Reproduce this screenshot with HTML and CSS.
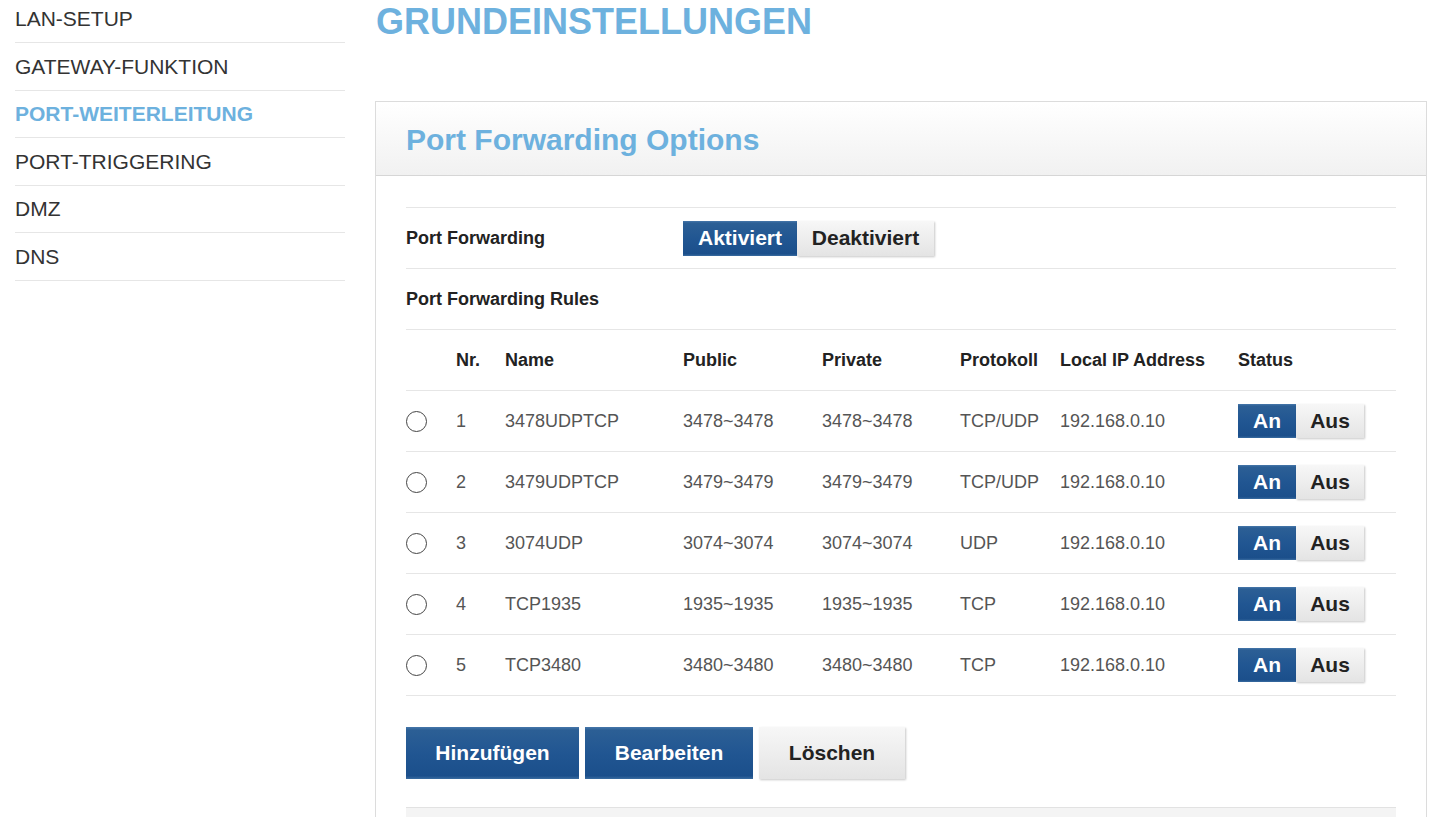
FILE: index.html
```html
<!DOCTYPE html>
<html lang="de">

<head>
    <meta charset="UTF-8">
    <meta name="viewport" content="width=device-width, initial-scale=1.0">
    <title>Port-Weiterleitung</title>
    <link rel="stylesheet" href="styles.css">
</head>

<body>
    <div class="page">
        <ul class="side-nav">
            <li class="side-item">LAN-SETUP</li>
            <li class="side-item">GATEWAY-FUNKTION</li>
            <li class="side-item active">PORT-WEITERLEITUNG</li>
            <li class="side-item">PORT-TRIGGERING</li>
            <li class="side-item">DMZ</li>
            <li class="side-item">DNS</li>
        </ul>

        <div class="main">
            <h1 class="page-title">GRUNDEINSTELLUNGEN</h1>

            <div class="panel">
                <div class="panel-head">
                    <h2>Port Forwarding Options</h2>
                </div>
                <div class="panel-body">
                    <div class="form-row">
                        <div class="form-label">Port Forwarding</div>
                        <div class="toggle">
                            <span class="btn btn-blue">Aktiviert</span><span class="btn btn-gray">Deaktiviert</span>
                        </div>
                    </div>
                    <div class="form-row">
                        <div class="form-label">Port Forwarding Rules</div>
                    </div>

                    <div class="rules">
                        <div class="rule head">
                            <span></span>
                            <span>Nr.</span>
                            <span>Name</span>
                            <span>Public</span>
                            <span>Private</span>
                            <span>Protokoll</span>
                            <span>Local IP Address</span>
                            <span>Status</span>
                        </div>
                        <div class="rule">
                            <span><i class="radio"></i></span>
                            <span>1</span>
                            <span>3478UDPTCP</span>
                            <span>3478~3478</span>
                            <span>3478~3478</span>
                            <span>TCP/UDP</span>
                            <span>192.168.0.10</span>
                            <span class="status"><b class="sw sw-on">An</b><b class="sw sw-off">Aus</b></span>
                        </div>
                        <div class="rule">
                            <span><i class="radio"></i></span>
                            <span>2</span>
                            <span>3479UDPTCP</span>
                            <span>3479~3479</span>
                            <span>3479~3479</span>
                            <span>TCP/UDP</span>
                            <span>192.168.0.10</span>
                            <span class="status"><b class="sw sw-on">An</b><b class="sw sw-off">Aus</b></span>
                        </div>
                        <div class="rule">
                            <span><i class="radio"></i></span>
                            <span>3</span>
                            <span>3074UDP</span>
                            <span>3074~3074</span>
                            <span>3074~3074</span>
                            <span>UDP</span>
                            <span>192.168.0.10</span>
                            <span class="status"><b class="sw sw-on">An</b><b class="sw sw-off">Aus</b></span>
                        </div>
                        <div class="rule">
                            <span><i class="radio"></i></span>
                            <span>4</span>
                            <span>TCP1935</span>
                            <span>1935~1935</span>
                            <span>1935~1935</span>
                            <span>TCP</span>
                            <span>192.168.0.10</span>
                            <span class="status"><b class="sw sw-on">An</b><b class="sw sw-off">Aus</b></span>
                        </div>
                        <div class="rule">
                            <span><i class="radio"></i></span>
                            <span>5</span>
                            <span>TCP3480</span>
                            <span>3480~3480</span>
                            <span>3480~3480</span>
                            <span>TCP</span>
                            <span>192.168.0.10</span>
                            <span class="status"><b class="sw sw-on">An</b><b class="sw sw-off">Aus</b></span>
                        </div>
                    </div>

                    <div class="actions">
                        <span class="btn btn-blue btn-big" style="width:173px">Hinzufügen</span>
                        <span class="btn btn-blue btn-big" style="width:168px">Bearbeiten</span>
                        <span class="btn btn-gray btn-big" style="width:146px">Löschen</span>
                    </div>

                    <div class="panel-foot"></div>
                </div>
            </div>
        </div>
    </div>
</body>

</html>
```

FILE: styles.css
```css
body {
    margin: 0;
    font-family: Arial, "Liberation Sans", sans-serif;
    color: #333;
    background: #fff;
}

.page {
    display: flex;
    gap: 30px;
    padding: 0 8px 0 15px;
}

/* left menu */
.side-nav {
    list-style: none;
    margin: -4.5px 0 0;
    padding: 0;
    width: 330px;
    flex-shrink: 0;
}
.side-item {
    font-size: 21px;
    line-height: 22px;
    padding: 12.5px 0 12px;
    border-bottom: 1px solid #e6e6e6;
    color: #333;
}
.side-item.active {
    color: #6db1de;
    font-weight: bold;
}

.main {
    flex: 1;
}
.page-title {
    margin: 4px 0 0 1px;
    font-size: 36px;
    line-height: 36px;
    color: #6db1de;
}

/* panel */
.panel {
    margin-top: 61px;
    border: 1px solid #dcdcdc;
    border-bottom: 0;
}
.panel-head {
    height: 73px;
    border-bottom: 1px solid #d6d6d6;
    background: linear-gradient(#fff, #f1f1f1);
    padding-left: 30px;
}
.panel-head h2 {
    margin: 0;
    font-size: 30px;
    line-height: 75px;
    color: #6db1de;
}
.panel-body {
    padding: 31px 30px 0;
}

.form-row {
    display: grid;
    grid-template-columns: 277px 1fr;
    align-items: center;
    height: 60px;
    border-top: 1px solid #e6e6e6;
}
.form-label {
    font-size: 18px;
    font-weight: bold;
    color: #222;
}

.btn {
    display: inline-flex;
    align-items: center;
    justify-content: center;
    font-weight: bold;
    font-size: 21px;
}
.btn-blue {
    color: #fff;
    background: linear-gradient(#4677aa 0, #2c5f95 6%, #215692 50%, #1b4f8b 94%, #3a6ca0 100%);
}
.btn-gray {
    color: #222;
    background: linear-gradient(#f7f7f7, #e4e4e4);
    box-shadow: 1px 1px 2px rgba(0, 0, 0, 0.22);
}
.toggle {
    display: flex;
}
.toggle .btn {
    height: 35px;
}
.toggle .btn-blue {
    width: 114px;
}
.toggle .btn-gray {
    width: 137px;
}

/* rules table */
.rule {
    display: grid;
    grid-template-columns: 50px 49px 178px 139px 138px 100px 178px 1fr;
    align-items: center;
    height: 60px;
    border-top: 1px solid #e6e6e6;
    font-size: 18px;
    color: #555;
}
.rule:last-child {
    border-bottom: 1px solid #e6e6e6;
}
.rule.head {
    font-weight: bold;
    color: #222;
}
.radio {
    display: block;
    width: 19px;
    height: 19px;
    border: 1px solid #444;
    border-radius: 50%;
    background: #fff;
}
.status {
    display: flex;
}
.sw {
    display: inline-flex;
    align-items: center;
    justify-content: center;
    height: 34px;
    font-size: 21px;
}
.sw-on {
    width: 58px;
    color: #fff;
    background: linear-gradient(#4677aa 0, #2c5f95 6%, #215692 50%, #1b4f8b 94%, #3a6ca0 100%);
}
.sw-off {
    width: 68px;
    color: #222;
    background: linear-gradient(#f7f7f7, #e4e4e4);
    box-shadow: 1px 1px 2px rgba(0, 0, 0, 0.22);
}

.actions {
    display: flex;
    gap: 6px;
    margin-top: 31px;
}
.btn-big {
    height: 52px;
}

.panel-foot {
    margin-top: 28px;
    height: 40px;
    border-top: 1px solid #e2e2e2;
    background: #f4f4f4;
}
```
